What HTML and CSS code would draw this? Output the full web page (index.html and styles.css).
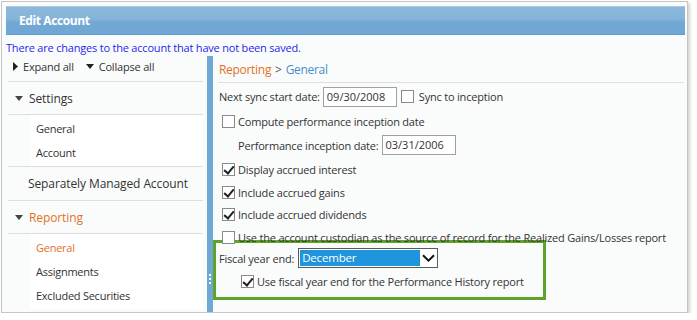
FILE: index.html
```html
<!DOCTYPE html>
<html lang="en">
<head>
    <meta charset="UTF-8">
    <title>Edit Account</title>
    <link rel="stylesheet" href="styles.css">
</head>
<body>

    <div class="window">
        <div class="titlebar">Edit Account</div>
        <p class="notice">There are changes to the account that have not been saved.</p>

        <div class="main">
            <nav class="tree">
                <div class="tree-tools">
                    <span class="tool">
                        <svg class="tri" width="5" height="9" viewBox="0 0 5 9"><path d="M0 0 L5 4.5 L0 9 Z"/></svg>
                        Expand all
                    </span>
                    <span class="tool">
                        <svg class="tri" width="8" height="5" viewBox="0 0 8 5"><path d="M0 0 L8 0 L4 5 Z"/></svg>
                        Collapse all
                    </span>
                </div>

                <div class="group">
                    <div class="group-head">
                        <svg class="tri" width="8" height="5" viewBox="0 0 8 5"><path d="M0 0 L8 0 L4 5 Z"/></svg>
                        Settings
                    </div>
                    <ul class="sub">
                        <li>General</li>
                        <li>Account</li>
                    </ul>
                </div>

                <div class="group">
                    <div class="group-head plain">Separately Managed Account</div>
                </div>

                <div class="group last">
                    <div class="group-head active">
                        <svg class="tri" width="8" height="5" viewBox="0 0 8 5"><path d="M0 0 L8 0 L4 5 Z"/></svg>
                        Reporting
                    </div>
                    <ul class="sub">
                        <li class="current">General</li>
                        <li>Assignments</li>
                        <li>Excluded Securities</li>
                    </ul>
                </div>
            </nav>

            <div class="splitter"><span class="grip"></span></div>

            <section class="content">
                <div class="crumbs">
                    <span class="crumb-parent">Reporting</span>
                    <span class="crumb-sep">&gt;</span>
                    <span class="crumb-current">General</span>
                </div>

                <div class="row r1">
                    <label class="label">Next sync start date:</label>
                    <span class="textbox">09/30/2008</span>
                    <span class="check"></span>
                    <span class="sync-label">Sync to inception</span>
                </div>

                <div class="row indent r2">
                    <span class="check"></span>
                    <span>Compute performance inception date</span>
                </div>

                <div class="row indent2 r3">
                    <label class="label">Performance inception date:</label>
                    <span class="textbox">03/31/2006</span>
                </div>

                <div class="row indent r4">
                    <span class="check on"></span>
                    <span>Display accrued interest</span>
                </div>

                <div class="row indent r5">
                    <span class="check on"></span>
                    <span>Include accrued gains</span>
                </div>

                <div class="row indent r6">
                    <span class="check on"></span>
                    <span>Include accrued dividends</span>
                </div>

                <div class="row indent r7">
                    <span class="check"></span>
                    <span>Use the account custodian as the source of record for the Realized Gains/Losses report</span>
                </div>

                <div class="fiscal">
                    <div class="fiscal-row">
                        <label class="label">Fiscal year end:</label>
                        <span class="select">
                            <span class="select-value">December</span>
                            <span class="select-arrow">
                                <svg width="13" height="8" viewBox="0 0 13 8"><path d="M1 1.2 L6.5 6.6 L12 1.2" fill="none" stroke="#111" stroke-width="1.9"/></svg>
                            </span>
                        </span>
                    </div>
                    <div class="fiscal-row sub-option">
                        <span class="check on"></span>
                        <span>Use fiscal year end for the Performance History report</span>
                    </div>
                </div>
            </section>
        </div>
    </div>

</body>
</html>
```

FILE: styles.css
```css
body {
    margin: 0;
    padding: 0;
    background-color: white;
    font-family: "Open Sans", Arial, sans-serif;
    font-size: 11px;
    letter-spacing: -0.2px;
    color: #333;
}

.window {
    box-sizing: border-box;
    width: 687px;
    height: 312px;
    margin: 1px 0 0 1px;
    border: 1px solid #c6c6c6;
    background-color: #fafcfc;
    box-shadow: 2px 2px 3px rgba(0, 0, 0, 0.18);
    display: flex;
    flex-direction: column;
}

.titlebar {
    height: 27px;
    margin: 4px 2px 0 4px;
    padding-left: 13px;
    border-top: 1px solid #a8c9e4;
    border-bottom: 1px solid #5e9ccf;
    background: linear-gradient(#8bb8dc, #86b4d9 45%, #72a8d4 55%, #6fa6d3);
    color: white;
    font-weight: bold;
    font-size: 12px;
    letter-spacing: -0.4px;
    line-height: 27px;
}

.notice {
    margin: 0;
    height: 16px;
    padding: 5px 0 0 4px;
    line-height: 16px;
    color: #1f1ff0;
}

.main {
    flex: 1;
    display: flex;
    min-height: 0;
}

/* left tree */
.tree {
    flex: none;
    width: 195px;
    padding: 0 4px 0 6px;
}

.tree-tools {
    box-sizing: border-box;
    height: 26px;
    padding: 0 0 5px 5px;
    display: flex;
    align-items: center;
    gap: 12px;
    border-bottom: 1px solid #dedede;
}

.tool {
    display: flex;
    align-items: center;
    gap: 5px;
}

.tri {
    fill: #222;
}

.group {
    border-bottom: 1px solid #dedede;
}

.group.last {
    border-bottom: none;
}

.group-head {
    height: 32px;
    display: flex;
    align-items: center;
    gap: 6px;
    padding-left: 7px;
    font-size: 12px;
    letter-spacing: -0.1px;
    border-bottom: 1px solid #dedede;
}

.group-head .tri {
    fill: #444;
}

.group-head.plain {
    height: 33px;
    padding-left: 20px;
    border-bottom: none;
}

.group-head.active {
    color: #e2711f;
}

.sub {
    list-style: none;
    margin: 0 0 0 22px;
    padding: 2px 0 1px 6px;
    background-color: white;
    letter-spacing: -0.25px;
}

.sub li {
    height: 24px;
    line-height: 24px;
}

.sub li.current {
    color: #e2711f;
}

/* splitter */
.splitter {
    flex: none;
    width: 6px;
    background-color: #70a8d5;
    display: flex;
    flex-direction: column;
    align-items: center;
}

.grip {
    margin-top: 218px;
    width: 2px;
    height: 10px;
    background: repeating-linear-gradient(white 0 2px, transparent 2px 4px);
}

/* right content */
.content {
    flex: 1;
    min-width: 0;
    padding: 0 3px 0 5px;
}

.crumbs {
    height: 26px;
    display: flex;
    align-items: center;
    gap: 4px;
    padding-left: 1px;
    font-size: 12px;
    letter-spacing: -0.3px;
    border-bottom: 1px solid #dedede;
}

.crumb-parent {
    color: #e2711f;
}

.crumb-sep {
    color: #555;
}

.crumb-current {
    color: #4a8ccc;
}

.row {
    display: flex;
    align-items: center;
    gap: 3px;
    padding-left: 1px;
    white-space: nowrap;
}

.r1 { height: 27px; }
.r2 { height: 23px; }
.r3 { height: 24px; }
.r4 { height: 24px; }
.r5 { height: 22px; }
.r6 { height: 22px; }
.r7 { height: 24px; }

.row.indent {
    padding-left: 4px;
}

.row.indent2 {
    padding-left: 20px;
}

.textbox {
    box-sizing: border-box;
    width: 74px;
    height: 20px;
    padding: 0 3px;
    border: 1px solid #a0a0a0;
    background-color: white;
    line-height: 18px;
    letter-spacing: 0;
}

.r1 .textbox {
    margin-right: 1px;
}

.sync-label {
    margin-left: 2px;
}

.check {
    box-sizing: border-box;
    width: 13px;
    height: 13px;
    flex: none;
    border: 1px solid #8a8a8a;
    background-color: white;
    position: relative;
}

.check.on::after {
    content: "";
    position: absolute;
    left: 3px;
    top: 0;
    width: 4px;
    height: 8px;
    border: solid #222;
    border-width: 0 2px 2px 0;
    transform: rotate(40deg);
}

/* fiscal year box */
.fiscal {
    box-sizing: border-box;
    width: 333px;
    height: 60px;
    margin: -9px 0 0 -5px;
    padding: 4px 3px 0 3px;
    border: 3px solid #5fa329;
}

.fiscal-row {
    height: 22px;
    display: flex;
    align-items: center;
    gap: 4px;
    white-space: nowrap;
}

.fiscal-row.sub-option {
    height: 24px;
    gap: 3px;
    padding-left: 22px;
}

.select {
    box-sizing: border-box;
    width: 140px;
    height: 20px;
    display: flex;
    border: 1px solid #5a5a5a;
    background-color: white;
    padding: 1px 0 1px 1px;
}

.select-value {
    flex: 1;
    background-color: #1f95dd;
    color: white;
    padding-left: 2px;
    line-height: 16px;
    font-size: 11.5px;
}

.select-arrow {
    width: 17px;
    display: flex;
    align-items: center;
    justify-content: center;
}
```
